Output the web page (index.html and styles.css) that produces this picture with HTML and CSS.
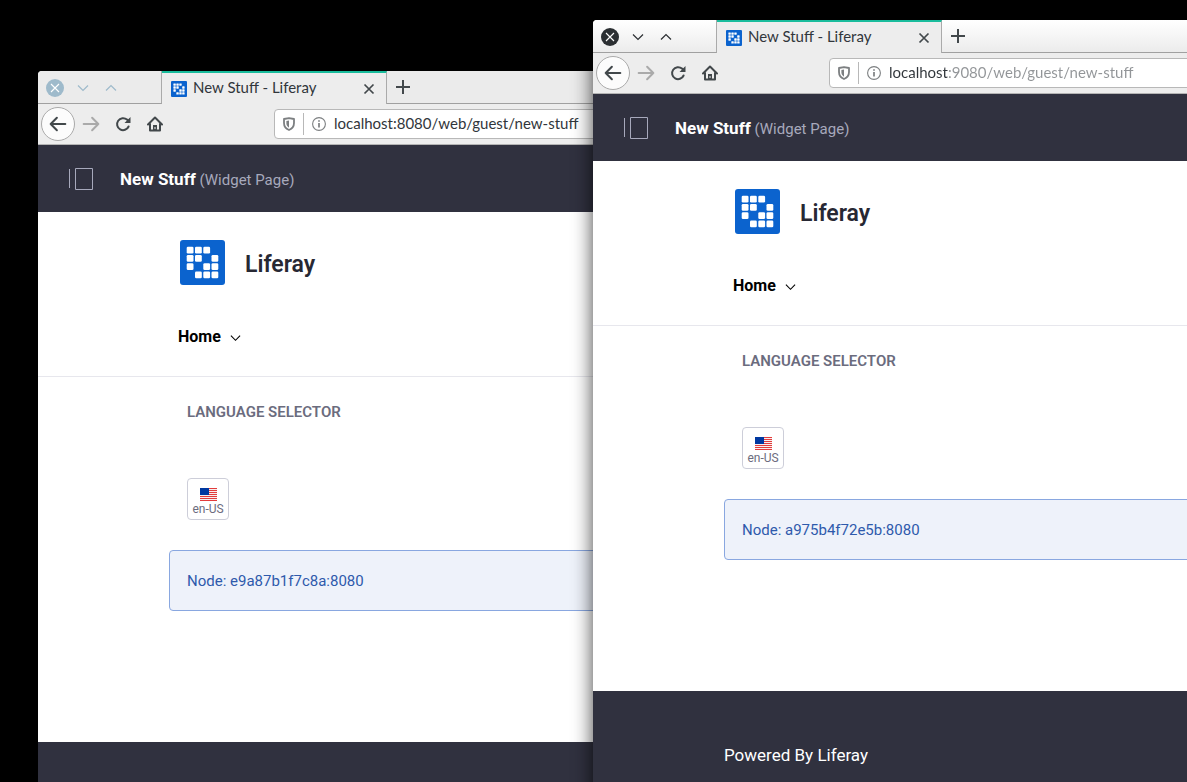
FILE: index.html
```html
<!DOCTYPE html>
<html lang="en">
<head>
<meta charset="utf-8">
<title>New Stuff - Liferay</title>
<link rel="stylesheet" href="styles.css">
</head>
<body>
<svg class="sprite" aria-hidden="true">
  <symbol id="close-round" viewBox="0 0 18 18"><circle cx="9" cy="9" r="9" fill="currentColor"/><path d="M5 5l8 8M13 5l-8 8" stroke="#fff" stroke-width="1.1"/></symbol>
  <symbol id="down" viewBox="0 0 12 12"><path d="M1 3.5l5 5 5-5" fill="none" stroke="currentColor" stroke-width="1.2"/></symbol>
  <symbol id="up" viewBox="0 0 12 12"><path d="M1 8.5l5-5 5 5" fill="none" stroke="currentColor" stroke-width="1.2"/></symbol>
  <symbol id="x" viewBox="0 0 12 12"><path d="M1.5 1.5l9 9M10.500 1.500l-9 9" stroke="currentColor" stroke-width="1.700"/></symbol>
  <symbol id="plus" viewBox="0 0 14 14"><path d="M7 0v14M0 7h14" stroke="currentColor" stroke-width="2"/></symbol>
  <symbol id="back" viewBox="0 0 16 16"><path d="M7 2.500L1.500 8 7 13.500M1.500 8H14.500" fill="none" stroke="currentColor" stroke-width="1.800" stroke-linecap="round" stroke-linejoin="round"/></symbol>
  <symbol id="forward" viewBox="0 0 16 16"><path d="M9 2.500l5.500 5.500L9 13.500M14.500 8H1.500" fill="none" stroke="currentColor" stroke-width="1.800" stroke-linecap="round" stroke-linejoin="round"/></symbol>
  <symbol id="reload" viewBox="0 0 16 16"><path d="M13.600 10.500A6 6 0 1 1 12 3.600L14 5.500" fill="none" stroke="currentColor" stroke-width="2" stroke-linecap="round"/><path d="M15.500 1v6h-6z" fill="currentColor"/></symbol>
  <symbol id="home" viewBox="0 0 16 16"><path d="M1 8.500L8 1.500l7 7M3 7.500V14.500h10V7.500" fill="none" stroke="currentColor" stroke-width="2" stroke-linecap="round" stroke-linejoin="round"/><path d="M6 9h4v6H6z" fill="currentColor"/><path d="M8 11v2" stroke="#ededed"/></symbol>
  <symbol id="shield" viewBox="0 0 12 14"><path d="M6 1.200L1 2v4c0 3.500 1.700 5.700 5 7 3.300-1.300 5-3.500 5-7V2z" fill="none" stroke="currentColor" stroke-width="1.800" stroke-linejoin="round"/><path d="M6 3.500L3.400 4v2.300c0 2 .9 3.300 2.600 4.400z" fill="currentColor"/></symbol>
  <symbol id="info" viewBox="0 0 14 14"><circle cx="7" cy="7" r="6.400" fill="none" stroke="currentColor" stroke-width="1.100"/><path d="M7 6v4.500M7 3.200v1.600" stroke="currentColor" stroke-width="1.700"/></symbol>
  <symbol id="panel" viewBox="0 0 25 24"><path d="M.5 2v19M6.500 1.500h17v21h-17z" fill="none" stroke="currentColor"/></symbol>
  <symbol id="logo" viewBox="0 0 45 45"><rect width="45" height="45" rx="3" fill="#0b63ce"/><g fill="#fff"><rect x="6.700" y="6.700" width="6.800" height="6.800" rx="1.300"/><rect x="15" y="6.700" width="6.800" height="6.800" rx="1.300"/><rect x="23.300" y="6.700" width="6.800" height="6.800" rx="1.300"/><rect x="6.700" y="15" width="6.800" height="6.800" rx="1.300"/><rect x="15" y="15" width="6.800" height="6.800" rx="1.300"/><rect x="31.500" y="15" width="6.800" height="6.800" rx="1.300"/><rect x="6.700" y="23.200" width="6.800" height="6.800" rx="1.300"/><rect x="23.300" y="23.200" width="6.800" height="6.800" rx="1.300"/><rect x="31.500" y="23.200" width="6.800" height="6.800" rx="1.300"/><rect x="15" y="31.500" width="6.800" height="6.800" rx="1.300"/><rect x="23.300" y="31.500" width="6.800" height="6.800" rx="1.300"/><rect x="31.500" y="31.500" width="6.800" height="6.800" rx="1.300"/></g></symbol>
  <symbol id="flag" viewBox="0 0 17 13"><path fill="#f8eeee" d="M0 0h17v13H0z"/><path d="M0 .5h17M0 2.500h17M0 4.500h17M0 6.500h17M0 8.500h17M0 10.500h17M0 12.500h17" stroke="#e23c3c"/><path fill="#0038a0" d="M0 0h9v7H0z"/></symbol>
</svg>
<main class="desktop">
  <section class="window window-back" aria-label="Browser, port 8080">
    <div class="tabs">
      <div class="controls">
        <button aria-label="Close window"><svg class="i18"><use href="#close-round"/></svg></button>
        <button aria-label="Minimize"><svg class="i12"><use href="#down"/></svg></button>
        <button aria-label="Maximize"><svg class="i12"><use href="#up"/></svg></button>
      </div>
      <div class="tab"><svg class="i16"><use href="#logo"/></svg><span class="tab-title">New Stuff - Liferay</span><button aria-label="Close tab"><svg class="i12"><use href="#x"/></svg></button></div>
      <button class="new-tab" aria-label="New tab"><svg class="i14"><use href="#plus"/></svg></button>
    </div>
    <div class="toolbar">
      <button class="back" aria-label="Back"><svg class="i18"><use href="#back"/></svg></button>
      <button class="tool forward" aria-label="Forward"><svg class="i18"><use href="#forward"/></svg></button>
      <button class="tool" aria-label="Reload"><svg class="i16"><use href="#reload"/></svg></button>
      <button class="tool" aria-label="Home"><svg class="i16"><use href="#home"/></svg></button>
      <div class="address"><span class="shield"><svg class="i14"><use href="#shield"/></svg></span><svg class="i14"><use href="#info"/></svg><input class="url" type="text" aria-label="Address" value="localhost:8080/web/guest/new-stuff"></div>
    </div>
    <div class="control-menu"><button aria-label="Toggle product menu"><svg class="panel"><use href="#panel"/></svg></button><p class="page-name"><strong>New Stuff</strong> <span>(Widget Page)</span></p></div>
    <header class="banner">
      <a class="brand" href="#"><svg class="logo"><use href="#logo"/></svg><span>Liferay</span></a>
      <nav><a class="nav-link" href="#">Home<svg class="caret"><use href="#down"/></svg></a></nav>
    </header>
    <div class="content">
      <h2 class="portlet-title">Language Selector</h2>
      <button class="language"><svg class="flag"><use href="#flag"/></svg><span>en-US</span></button>
      <div class="node">Node: e9a87b1f7c8a:8080</div>
    </div>
    <footer class="footer"></footer>
  </section>

  <section class="window window-front" aria-label="Browser, port 9080">
    <div class="tabs">
      <div class="controls">
        <button aria-label="Close window"><svg class="i18"><use href="#close-round"/></svg></button>
        <button aria-label="Minimize"><svg class="i12"><use href="#down"/></svg></button>
        <button aria-label="Maximize"><svg class="i12"><use href="#up"/></svg></button>
      </div>
      <div class="tab"><svg class="i16"><use href="#logo"/></svg><span class="tab-title">New Stuff - Liferay</span><button aria-label="Close tab"><svg class="i12"><use href="#x"/></svg></button></div>
      <button class="new-tab" aria-label="New tab"><svg class="i14"><use href="#plus"/></svg></button>
    </div>
    <div class="toolbar">
      <button class="back" aria-label="Back"><svg class="i18"><use href="#back"/></svg></button>
      <button class="tool forward" aria-label="Forward"><svg class="i18"><use href="#forward"/></svg></button>
      <button class="tool" aria-label="Reload"><svg class="i16"><use href="#reload"/></svg></button>
      <button class="tool" aria-label="Home"><svg class="i16"><use href="#home"/></svg></button>
      <div class="address"><span class="shield"><svg class="i14"><use href="#shield"/></svg></span><svg class="i14"><use href="#info"/></svg><input class="url url-dimmed" type="text" aria-label="Address" value="localhost:9080/web/guest/new-stuff"></div>
    </div>
    <div class="control-menu"><button aria-label="Toggle product menu"><svg class="panel"><use href="#panel"/></svg></button><p class="page-name"><strong>New Stuff</strong> <span>(Widget Page)</span></p></div>
    <header class="banner">
      <a class="brand" href="#"><svg class="logo"><use href="#logo"/></svg><span>Liferay</span></a>
      <nav><a class="nav-link" href="#">Home<svg class="caret"><use href="#down"/></svg></a></nav>
    </header>
    <div class="content">
      <h2 class="portlet-title">Language Selector</h2>
      <button class="language"><svg class="flag"><use href="#flag"/></svg><span>en-US</span></button>
      <div class="node">Node: a975b4f72e5b:8080</div>
    </div>
    <footer class="footer">Powered By Liferay</footer>
  </section>
</main>
</body>
</html>
```

FILE: styles.css
```css
* { box-sizing: border-box; }
body { margin: 0; background: #000; font-family: Roboto, sans-serif; font-size: 15px; color: #272833; }
button { display: flex; align-items: center; justify-content: center; padding: 0; border: 0; background: none; color: inherit; font: inherit; }
a { color: inherit; text-decoration: none; }
svg { display: block; flex: none; }
.sprite { position: absolute; width: 0; height: 0; }
.i12 { width: 12px; height: 12px; }
.i14 { width: 14px; height: 14px; }
.i16 { width: 16px; height: 16px; }
.i18 { width: 18px; height: 18px; }

.desktop { position: relative; height: 100vh; overflow: hidden; }
.window { position: absolute; display: flex; flex-direction: column; background: #fff; border-radius: 4px 4px 0 0; }
.window-back { left: 38px; top: 71px; right: 0; }
.window-front { left: 593px; top: 20px; right: -80px; box-shadow: 0 4px 20px rgba(0, 0, 0, .75); }

.tabs { display: flex; height: 33px; background: #ebebeb; border-radius: 4px 4px 0 0; color: #42484b; }
.window-front .tabs { background: linear-gradient(#fff, #ebebeb); }
.controls { display: flex; align-items: center; gap: 16px; width: 124px; padding: 2px 0 0 8px; border-right: 1px solid #aaa; border-bottom: 1px solid #a0a0a0; color: #2b2f32; }
.controls button:first-child { margin-right: -3px; }
.window-back .controls { color: #9ebacb; }
.tab { display: flex; align-items: center; width: 225px; padding: 0 11px 0 9px; gap: 6px; background: #ededed; border-top: 2px solid #1abc9c; border-right: 1px solid #aaa; }
.tab-title { flex: 1; padding-bottom: 4px; font: 15px/20px Lato, sans-serif; color: #31363b; }
.new-tab { flex: 1; justify-content: flex-start; padding-left: 9px; border-bottom: 1px solid #a0a0a0; }

.toolbar { display: flex; align-items: center; height: 41px; padding-left: 3px; background: #ededed; border-bottom: 1px solid #b4b4b4; color: #42484b; }
.back { width: 34px; height: 34px; border: 1px solid #aaa; border-radius: 50%; background: #fcfcfc; }
.tool { width: 32px; height: 32px; }
.forward { color: #aaa; }
.address { display: flex; align-items: center; flex: 1; height: 30px; margin-left: 103px; padding-left: 7px; gap: 8px; background: #fff; border: 1px solid #b8b8b8; border-radius: 4px; color: #7c7f81; }
.shield { padding: 4px 7px 4px 0; border-right: 1px solid #b8b8b8; }
.url { flex: 1; min-width: 0; padding: 0 0 2px; border: 0; outline: 0; background: none; font: 15px/20px Lato, sans-serif; color: #31363b; }
.url-dimmed { background: linear-gradient(90deg, #31363b 60px, #929598 60px); background-clip: text; -webkit-background-clip: text; color: transparent; }

.control-menu { display: flex; align-items: center; gap: 26px; height: 67px; padding-left: 31px; background: #30313f; color: #a7a9bc; }
.panel { width: 25px; height: 24px; }
.page-name { margin: 0; padding-top: 2px; line-height: 24px; }
.page-name strong { font-size: 17px; color: #fff; }

.banner { height: 165px; padding: 28px 0 0 140px; border-bottom: 1px solid #e7e7ed; }
.brand { display: flex; align-items: center; gap: 20px; padding-left: 2px; font-size: 23px; font-weight: 600; }
.brand span { line-height: 28px; padding-top: 4px; }
.logo { width: 45px; height: 45px; }
.nav-link { display: flex; align-items: center; gap: 9px; margin-top: 41px; font-size: 16px; line-height: 22px; font-weight: 700; color: #000; }
.caret { width: 11px; height: 12px; margin-top: 2px; }

.content { padding: 24px 0 131px 131px; }
.portlet-title { margin: 0 0 55px 18px; font-size: 15px; line-height: 22px; font-weight: 600; text-transform: uppercase; color: #6b6c7e; }
.language { flex-direction: column; gap: 1px; width: 42px; height: 42px; margin-left: 18px; padding-top: 5px; border: 1px solid #cdced9; border-radius: 4px; font-size: 12px; line-height: 14px; color: #6b6c7e; }
.flag { width: 17px; height: 13px; }
.node { margin-top: 30px; padding: 19px 17px 17px; border: 1px solid #89a7e0; border-radius: 4px 0 0 4px; background: #eef2fa; font-size: 15px; line-height: 23px; color: #2e5aac; }
.footer { min-height: 156px; padding: 52px 131px 80px; background: #30313f; font-size: 17px; line-height: 24px; color: #fff; }
```
